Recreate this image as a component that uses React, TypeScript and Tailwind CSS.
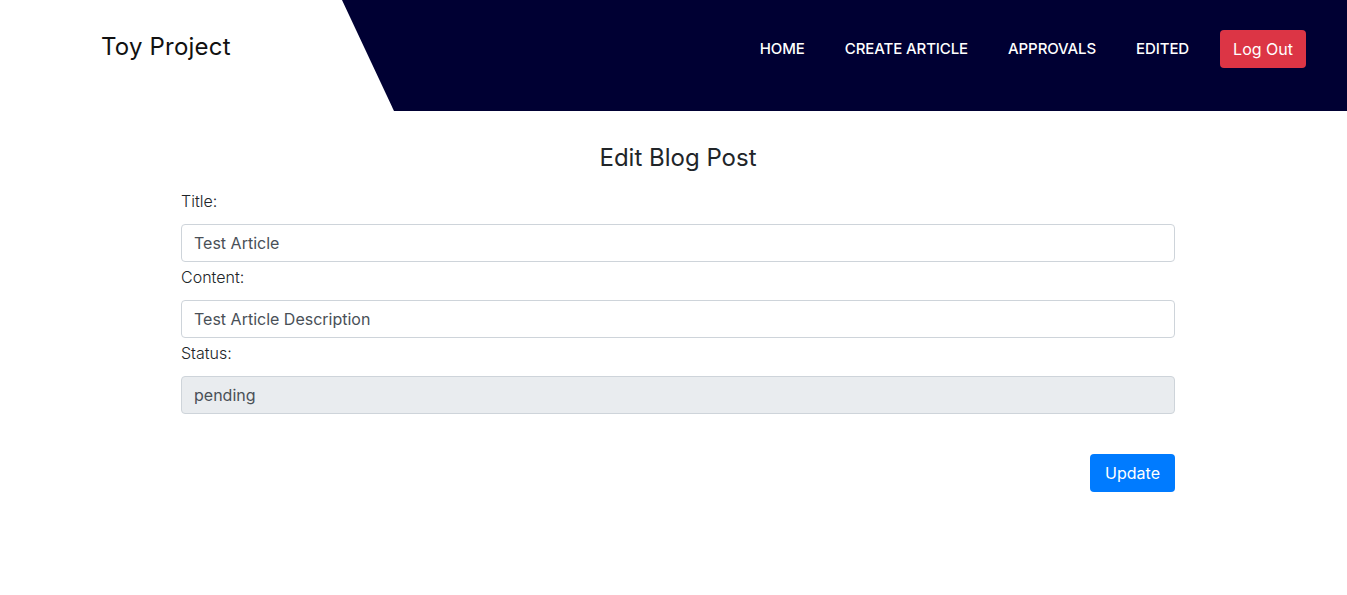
import React, { useState } from "react";

const font = { fontFamily: "Inter, 'Noto Sans', sans-serif" };

const navItems = ["HOME", "CREATE ARTICLE", "APPROVALS", "EDITED"];

const Field: React.FC<{
  label: string;
  value: string;
  onChange?: (v: string) => void;
  disabled?: boolean;
}> = ({ label, value, onChange, disabled }) => (
  <div>
    <label className="mb-2 block text-[16px] font-light leading-[30px] text-[#212529]">{label}</label>
    <input
      value={value}
      disabled={disabled}
      onChange={(e) => onChange?.(e.target.value)}
      className={
        "block h-[38px] w-full rounded-[4px] border border-[#ced4da] px-3 text-[16px] text-[#495057] outline-none " +
        (disabled ? "bg-[#e9ecef]" : "bg-white")
      }
    />
  </div>
);

const App: React.FC = () => {
  const [title, setTitle] = useState("Test Article");
  const [content, setContent] = useState("Test Article Description");

  return (
    <div className="min-h-screen bg-white" style={font}>
      <header className="flex h-[111px] bg-[#000033]">
        <div className="flex w-[394px] items-center bg-white pb-[18px] pl-[101px] [clip-path:polygon(0_0,342px_0,100%_100%,0_100%)]">
          <span className="text-[24px] font-normal tracking-[0.2px] text-[#111]">Toy Project</span>
        </div>
        <nav className="flex flex-1 items-center justify-end gap-10 pb-[14px] pr-[41px]">
          {navItems.map((item) => (
            <a key={item} href="#" className="pt-[2px] text-[15px] font-medium tracking-[-0.1px] text-white">
              {item}
            </a>
          ))}
          <button className="-ml-[9px] h-[38px] rounded-[4px] bg-[#dc3545] px-[13px] text-[16px] text-white">Log Out</button>
        </nav>
      </header>

      <main className="ml-[181px] w-[994px] pt-[29px]">
        <h3 className="mb-[10px] text-center text-[24px] leading-[36px] text-[#212529]">Edit Blog Post</h3>
        <Field label="Title:" value={title} onChange={setTitle} />
        <Field label="Content:" value={content} onChange={setContent} />
        <Field label="Status:" value="pending" disabled />
        <div className="mt-10 flex justify-end">
          <button className="h-[38px] rounded-[4px] bg-[#007bff] px-[15px] text-[16px] text-white">Update</button>
        </div>
      </main>
    </div>
  );
};

export default App;
